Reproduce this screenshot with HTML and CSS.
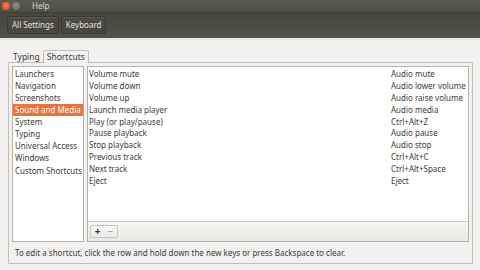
FILE: index.html
```html
<!DOCTYPE html>
<html>
<head>
<meta charset="utf-8">
<link rel="stylesheet" href="styles.css">
</head>
<body>
<div class="window">
  <div class="titlebar">
    <span class="dot dot-close"></span>
    <span class="dot dot-min"></span>
    <span class="title">Help</span>
  </div>
  <div class="toolbar">
    <div class="tbtn">All Settings</div>
    <div class="tbtn">Keyboard</div>
  </div>
  <div class="content">
    <div class="tabs">
      <div class="tab">Typing</div>
      <div class="tab tab-active">Shortcuts</div>
    </div>
    <div class="frame">
      <div class="panes">
        <div class="sections">
          <div class="sec">Launchers</div>
          <div class="sec">Navigation</div>
          <div class="sec">Screenshots</div>
          <div class="sec sec-sel">Sound and Media</div>
          <div class="sec">System</div>
          <div class="sec">Typing</div>
          <div class="sec">Universal Access</div>
          <div class="sec">Windows</div>
          <div class="sec sec-custom">Custom Shortcuts</div>
        </div>
        <div class="shortcuts">
          <div class="table">
            <div class="row"><span class="name">Volume mute</span><span class="key">Audio mute</span></div>
            <div class="row"><span class="name">Volume down</span><span class="key">Audio lower volume</span></div>
            <div class="row"><span class="name">Volume up</span><span class="key">Audio raise volume</span></div>
            <div class="row"><span class="name">Launch media player</span><span class="key">Audio media</span></div>
            <div class="row"><span class="name">Play (or play/pause)</span><span class="key">Ctrl+Alt+Z</span></div>
            <div class="row"><span class="name">Pause playback</span><span class="key">Audio pause</span></div>
            <div class="row"><span class="name">Stop playback</span><span class="key">Audio stop</span></div>
            <div class="row"><span class="name">Previous track</span><span class="key">Ctrl+Alt+C</span></div>
            <div class="row"><span class="name">Next track</span><span class="key">Ctrl+Alt+Space</span></div>
            <div class="row"><span class="name">Eject</span><span class="key">Eject</span></div>
          </div>
          <div class="listbar">
            <div class="pm"><span class="pm-btn">+</span><span class="pm-btn pm-dim">−</span></div>
          </div>
        </div>
      </div>
      <div class="hint">To edit a shortcut, click the row and hold down the new keys or press Backspace to clear.</div>
    </div>
  </div>
</div>
</body>
</html>
```

FILE: styles.css
```css
* { box-sizing: border-box; }
html, body { margin: 0; padding: 0; }
body {
  width: 480px;
  height: 270px;
  overflow: hidden;
  background: #f2f1f0;
  font-family: "Noto Sans", "Liberation Sans", sans-serif;
  font-size: 8px;
  color: #3c3c3c;
}
.window { width: 480px; height: 270px; display: flex; flex-direction: column; }
.titlebar {
  height: 12px;
  background: linear-gradient(#5a594e, #4f4e45);
  display: flex;
  align-items: center;
  padding-left: 2px;
}
.dot { width: 8px; height: 8px; border-radius: 50%; margin-right: 2px; }
.dot-close { background: radial-gradient(circle at 50% 40%, #f47a55, #d9451d); }
.dot-min { background: radial-gradient(circle at 50% 40%, #8d8b84, #67665f); }
.title { color: #d8d6cf; margin-left: 10px; font-size: 8px; line-height: 12px; }
.toolbar {
  height: 28px;
  background: linear-gradient(#3f3e38 0, #46453e 8%, #52514a 100%);
  border-bottom: 2px solid #e6e4e0;
  display: flex;
  align-items: center;
  padding-left: 7px;
  gap: 2px;
}
.tbtn {
  height: 18px;
  padding: 0 4px;
  border: 1px solid #3a3934;
  border-radius: 2px;
  background: linear-gradient(#4d4c45, #45443e);
  box-shadow: inset 0 1px 0 rgba(255,255,255,0.06);
  color: #e4e1da;
  font-size: 8px;
  line-height: 16px;
}
.content { flex: 1; padding: 10px 7px 0 8px; display: flex; flex-direction: column; }
.tabs { display: flex; height: 12px; padding-left: 2px; align-items: flex-end; }
.tab { padding: 0 3px; line-height: 11px; font-size: 8.5px; }
.tab-active {
  border: 1px solid #c2beb8;
  border-bottom: none;
  border-radius: 2px 2px 0 0;
  height: 13px;
  line-height: 12px;
  background: #f2f1f0;
  margin-bottom: -1px;
  position: relative;
}
.frame {
  border: 1px solid #c2beb8;
  border-radius: 1px;
  padding: 3px 3px 0 3px;
  height: 202px;
  display: flex;
  flex-direction: column;
}
.panes { display: flex; gap: 3px; height: 177px; }
.sections {
  width: 72px;
  background: #fff;
  border: 1px solid #b4b1ab;
  padding-top: 1px;
}
.sec { height: 12px; line-height: 12px; padding-left: 2px; white-space: nowrap; }
.sec-sel { background: #e9733f; color: #fff; }
.sec-custom { margin-top: 1px; }
.shortcuts { flex: 1; display: flex; flex-direction: column; border: 1px solid #b4b1ab; }
.table { flex: 1; background: #fff; padding-top: 1px; }
.row { height: 11.9px; line-height: 12px; display: flex; padding-left: 1px; white-space: nowrap; }
.name { width: 302px; }
.key { flex: 1; }
.listbar {
  height: 20px;
  border-top: 1px solid #cdcac5;
  background: linear-gradient(#f7f6f5, #eae8e5);
  display: flex;
  align-items: center;
  padding-left: 2px;
}
.pm {
  display: flex;
  height: 13px;
  border: 1px solid #c9c6c1;
  border-radius: 2px;
  background: linear-gradient(#fbfbfa, #eceae7);
}
.pm-btn { width: 13px; text-align: center; line-height: 11px; font-size: 10px; font-weight: bold; color: #3c3c3c; }
.pm-dim { color: #9a9893; font-weight: normal; }
.hint { height: 21px; line-height: 21px; padding-left: 3px; white-space: nowrap; }
```
